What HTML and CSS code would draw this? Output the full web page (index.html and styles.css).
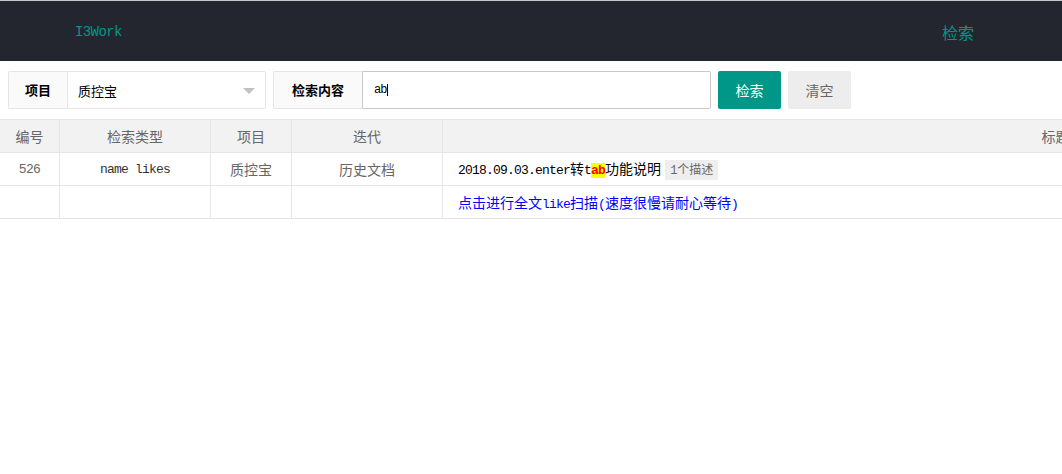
FILE: index.html
```html
<!DOCTYPE html>
<html lang="zh">
<head>
<meta charset="utf-8">
<link rel="stylesheet" href="styles.css">
</head>
<body>
<header class="topbar">
  <div class="logo">I3Work</div>
  <div class="nav-item">检索</div>
</header>
<form class="search-form">
  <div class="field field-project">
    <label class="field-label">项目</label>
    <div class="select">
      <span class="select-value">质控宝</span>
      <span class="select-arrow"></span>
    </div>
  </div>
  <div class="field field-keyword">
    <label class="field-label field-label-wide">检索内容</label>
    <div class="input"><span class="input-text">ab</span><span class="caret"></span></div>
  </div>
  <button type="button" class="btn btn-primary">检索</button>
  <button type="button" class="btn btn-default">清空</button>
</form>
<div class="table-wrap">
  <table class="result-table">
    <colgroup>
      <col class="c-id"><col class="c-type"><col class="c-proj"><col class="c-iter"><col class="c-title">
    </colgroup>
    <thead>
      <tr><th>编号</th><th>检索类型</th><th>项目</th><th>迭代</th><th>标题</th></tr>
    </thead>
    <tbody>
      <tr>
        <td class="num">526</td>
        <td class="mono">name likes</td>
        <td>质控宝</td>
        <td>历史文档</td>
        <td class="title"><span class="a">2018.09.03.enter</span>转<span class="a">t</span><span class="a hl">ab</span>功能说明 <span class="badge"><span class="a">1</span>个描述</span></td>
      </tr>
      <tr>
        <td></td><td></td><td></td><td></td>
        <td class="title"><a class="fulltext" href="#">点击进行全文<span class="a">like</span>扫描<span class="a">(</span>速度很慢请耐心等待<span class="a">)</span></a></td>
      </tr>
    </tbody>
  </table>
</div>
</body>
</html>
```
FILE: styles.css
```css
html, body {
  margin: 0;
  padding: 0;
  background: #fff;
  overflow: hidden;
}
body {
  font-family: "Liberation Sans", "Noto Sans CJK SC", sans-serif;
  font-size: 14px;
  color: #333;
  width: 1062px;
}
.topbar {
  height: 60px;
  border-top: 1px solid #c8c8c8;
  background: #23262e;
  display: flex;
  align-items: center;
  justify-content: space-between;
  padding: 0 88px 0 75px;
}
.logo {
  font-family: "Liberation Mono", "Noto Sans CJK SC", monospace;
  font-size: 14px;
  letter-spacing: -0.6px;
  color: #009688;
  padding-top: 2px;
}
.nav-item {
  font-family: "Noto Sans CJK SC", sans-serif;
  font-size: 16px;
  color: #009688;
  padding-top: 1px;
}
.search-form {
  display: flex;
  align-items: stretch;
  padding: 10px 8px 0 8px;
  height: 38px;
  gap: 7px;
}
.field {
  display: flex;
  height: 38px;
}
.field-label {
  box-sizing: border-box;
  width: 59px;
  height: 38px;
  line-height: 36px;
  text-align: center;
  background: #fafafa;
  border: 1px solid #e6e6e6;
  border-right: none;
  border-radius: 2px 0 0 2px;
  font-family: "Noto Sans CJK SC", sans-serif;
  font-weight: bold;
  font-size: 13px;
  color: #000;
}
.field-label-wide {
  width: 89px;
}
.select {
  box-sizing: border-box;
  width: 199px;
  height: 38px;
  border: 1px solid #e6e6e6;
  border-radius: 0 2px 2px 0;
  display: flex;
  align-items: center;
  justify-content: space-between;
  padding: 0 10px 0 10px;
}
.select-value {
  font-family: "Noto Sans CJK SC", sans-serif;
  font-size: 13px;
  color: #000;
}
.select-arrow {
  width: 0;
  height: 0;
  border-left: 6px solid transparent;
  border-right: 6px solid transparent;
  border-top: 6px solid #c2c2c2;
  margin-top: 2px;
}
.input {
  box-sizing: border-box;
  width: 349px;
  height: 38px;
  border: 1px solid #c9c9c9;
  border-radius: 0 2px 2px 0;
  display: flex;
  align-items: center;
  padding-left: 11px;
}
.input-text {
  font-family: "Liberation Mono", monospace;
  font-size: 12px;
  color: #000;
  letter-spacing: -1px;
}
.caret {
  width: 1px;
  height: 12px;
  background: #000;
  margin-left: 1px;
}
.btn {
  box-sizing: border-box;
  height: 38px;
  width: 63px;
  border: none;
  border-radius: 2px;
  font-family: "Noto Sans CJK SC", sans-serif;
  font-size: 14px;
  padding: 0;
  cursor: pointer;
}
.btn-primary {
  background: #009688;
  color: #fff;
}
.btn-default {
  background: #ededed;
  color: #666;
}
.table-wrap {
  margin-top: 10px;
  width: 1062px;
  overflow: hidden;
}
.result-table {
  width: 1669px;
  border-collapse: collapse;
  table-layout: fixed;
  margin-left: -1px;
}
.c-id { width: 60px; }
.c-type { width: 151px; }
.c-proj { width: 81px; }
.c-iter { width: 151px; }
.c-title { width: 1226px; }
.result-table th,
.result-table td {
  border: 1px solid #e6e6e6;
  height: 33px;
  box-sizing: border-box;
  padding: 0 15px;
  text-align: center;
  white-space: nowrap;
  font-family: "Noto Sans CJK SC", sans-serif;
  font-weight: normal;
}
.result-table th {
  background: #f2f2f2;
  color: #666;
  font-size: 14px;
}
.result-table td {
  color: #666;
  font-size: 14px;
}
.result-table td.num {
  font-family: "Liberation Mono", monospace;
  font-size: 13px;
  letter-spacing: -0.6px;
}
.result-table td.mono {
  font-family: "Liberation Mono", monospace;
  font-size: 13px;
  letter-spacing: -0.8px;
  color: #333;
}
.result-table td.title {
  text-align: left;
  color: #000;
  font-size: 14px;
}
.a {
  font-family: "Liberation Mono", monospace;
  font-size: 13px;
  letter-spacing: -0.8px;
}
.hl {
  background: #ffff00;
  color: #ff0000;
  font-weight: bold;
}
.badge {
  display: inline-block;
  background: #eee;
  color: #666;
  font-size: 12px;
  padding: 0 5px;
  line-height: 18px;
  margin-left: 1px;
}
.badge .a {
  font-size: 12px;
  letter-spacing: -0.2px;
}
.fulltext {
  color: #0000ff;
  text-decoration: none;
}
```
